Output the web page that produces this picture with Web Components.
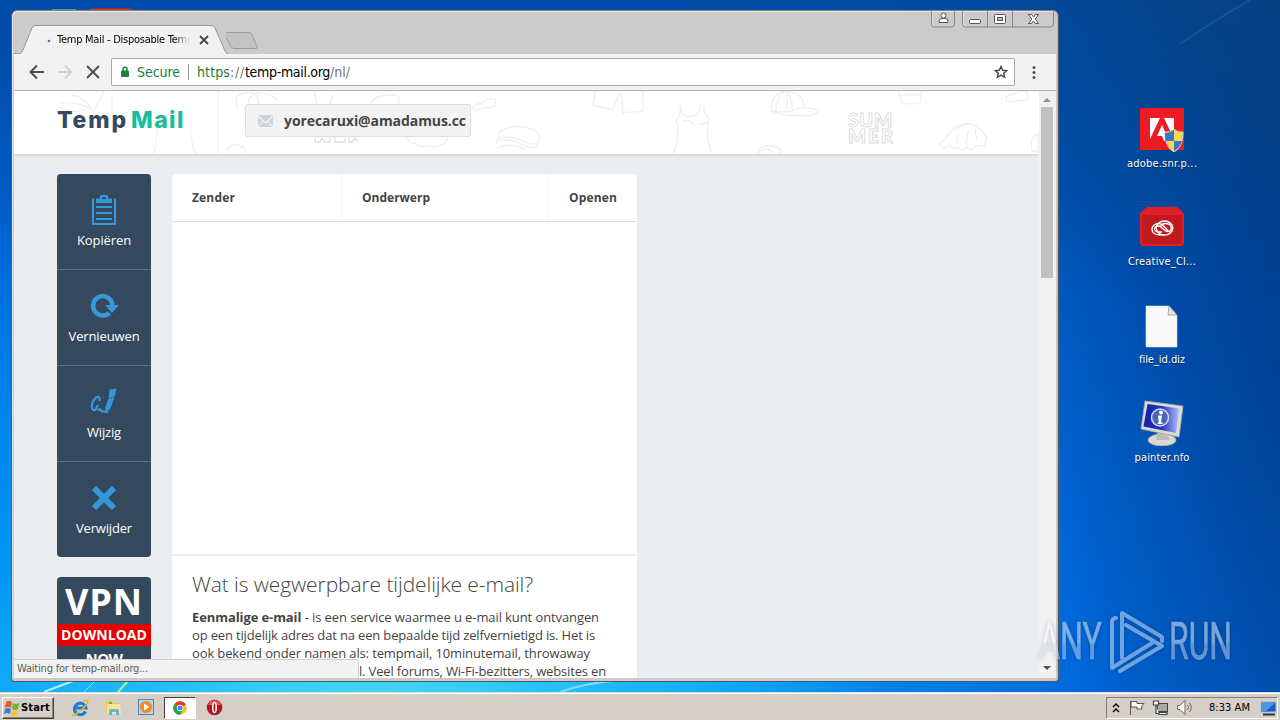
<!DOCTYPE html>
<html lang="nl">
<head>
<meta charset="utf-8">
<title>Desktop</title>
<style>
  html, body { margin: 0; width: 1280px; height: 720px; overflow: hidden; }
  body { font-family: "DejaVu Sans Condensed", "DejaVu Sans", sans-serif; font-size: 11px; }
</style>
</head>
<body>
<desktop-screen>
  <browser-window>
    <mail-page></mail-page>
  </browser-window>

  <desktop-icon label="adobe.snr.p..." width="70" style="left:1122px;top:108px">
    <svg width="44" height="44" viewBox="0 0 44 44">
      <rect width="44" height="42" fill="#ed1c24"/>
      <path d="M10 10h10L10 31zM24 10h10v21zM22 17l7 16h-5l-2-5h-5z" fill="#fff"/>
      <path d="M34 21c3 3 6 3 9 3 0 9-2 16-9 20-7-4-9-11-9-20 3 0 6 0 9-3z" fill="#f5d84c" stroke="#c9d3dc"/>
      <path d="M34 22v11h-8.500q-.5-4-.5-8 5 0 8-3zM34 33h8q-2 7-8 10z" fill="#3b78c4"/>
    </svg>
  </desktop-icon>
  <desktop-icon label="Creative_Cl..." width="68" style="left:1122px;top:206px">
    <svg width="44" height="44" viewBox="0 0 44 44">
      <path d="M1 8l6-6h30l6 6v28q0 3-3 3H4q-3 0-3-3z" fill="#c01a1e" stroke="#ed1c24" stroke-width="2"/>
      <path d="M2 8l6-5h28l6 5z" fill="#d8232a"/><path d="M2 8h40" stroke="#ed1c24" stroke-width="2"/>
      <g fill="none" stroke="#fff" stroke-width="1.400">
        <ellipse cx="24.500" cy="22" rx="8.300" ry="7"/>
        <path d="M24 28.700h-5.500c-4 0-6.500-2.500-6.500-5.500s3-5.700 6.500-5.700c2 0 3.500 1 5 2.500l4.500 4.500"/>
        <path d="M22 26h-3c-2.500 0-4.300-1-4.300-3s2-3 4-3 3 1.500 4.500 3 3 2.500 5 2.500c2 0 3-2 3-4s-2-4-6-4q-3 0-4.500 2"/>
      </g>
    </svg>
  </desktop-icon>
  <desktop-icon label="file_id.diz" width="46" style="left:1122px;top:304px">
    <svg width="44" height="44" viewBox="0 0 44 44">
      <path d="M6 2h23l8 9v32H6z" fill="#f9f9f9" stroke="#d5dce4" stroke-width=".6"/>
      <path d="M29 2l-1 9h9z" fill="#e3e3e3" stroke="#888" stroke-width=".7"/>
    </svg>
  </desktop-icon>
  <desktop-icon label="painter.nfo" width="55" style="left:1122px;top:400px">
    <svg width="44" height="46" viewBox="0 0 44 46">
      <defs><linearGradient id="scr"><stop offset="0" stop-color="#1720a8"/><stop offset=".5" stop-color="#2430c0"/><stop offset="1" stop-color="#b8c2ff"/></linearGradient></defs>
      <ellipse cx="22" cy="40" rx="14" ry="6" fill="#d9d9d2" stroke="#aaa9a3"/>
      <path d="M17 33h11l1 7H16z" fill="#bdbdb6"/>
      <path d="M5 1l38 5-4 31L1 29z" fill="#dcdcd4" stroke="#a8a8a0" stroke-width=".8"/>
      <path d="M7.500 4l32 4.500-3.500 24.500L3.500 26.500z" fill="url(#scr)"/>
      <circle cx="20" cy="17.500" r="8.500" fill="#4e66b8" stroke="#d2dcf5" stroke-width="1.500"/>
      <circle cx="21" cy="12.500" r="1.900" fill="#fff"/><path d="M18 15.500h4l-1.200 7h2l-.3 1.500h-5l.4-1.500h1z" fill="#fff"/>
    </svg>
  </desktop-icon>

  <any-watermark></any-watermark>
  <task-bar slot="bar"></task-bar>
</desktop-screen>

<script>
// Text set to a known width by spreading the difference over its letters
class FitText extends HTMLElement {
  connectedCallback() {
    if (!this.shadowRoot) {
      // no white space around the slot: it would be kept and drawn
      this.attachShadow({ mode: 'open' }).innerHTML =
        '<style>:host { display: inline-block; white-space: pre; }</style><slot></slot>';
    }
    const natural = this.getBoundingClientRect().width;
    const target = Number(this.getAttribute('width'));
    if (natural && target) {
      this.style.letterSpacing = (target - natural) / this.textContent.length + 'px';
    }
  }
}

class DesktopScreen extends HTMLElement {
  constructor() {
    super();
    this.attachShadow({ mode: 'open' }).innerHTML = `
      <style>
        :host { display: flex; flex-direction: column; width: 1280px; height: 720px; overflow: hidden; }
        .area {
          position: relative;
          flex: 1;
          overflow: hidden;
          background:
            radial-gradient(ellipse 520px 200px at 370px 710px, #4bdcf2 0%, rgba(35,190,250,.85) 45%, transparent 100%),
            radial-gradient(ellipse 330px 700px at 1340px 330px, rgba(0,50,120,.7), transparent),
            radial-gradient(ellipse 1320px 820px at 360px 640px, #12b6ff 0%, #0095f4 28%, #006ade 55%, #0056bc 76%, #00489e 100%);
        }
        .area::before {
          content: "";
          position: absolute;
          inset: 0 0 auto 0;
          height: 300px;
          background: linear-gradient(90deg, #004ba6 70%, #07427f);
          -webkit-mask: linear-gradient(#000, transparent);
          mask: linear-gradient(#000, transparent);
          opacity: .85;
        }
        svg { position: absolute; left: 0; top: 0; }
      </style>
      <div class="area">
        <svg width="1280" height="692" viewBox="0 0 1280 692" fill="none">
          <path d="M1180 44Q1215 20 1250 0" stroke="#3f7fc0" stroke-opacity=".3" stroke-width="1.500"/>
          <path d="M44 692q18-7 32-12" stroke="#b9f1ff" stroke-width="2"/>
          <path d="M84 692l10-10" stroke="#7ee0ff"/>
          <path d="M118 692l10-11" stroke="#b6f08a" stroke-width="2"/>
          <path d="M560 692q22-8 52-11" stroke="#8ed8ff" stroke-width="2"/>
          <path d="M90 10l2-1.500h39l2 1.500z" fill="#e52a1c"/><path d="M52 10h24" stroke="#b8c8e0"/>
        </svg>
        <slot></slot>
      </div>
      <slot name="bar"></slot>
    `;
  }
}

class DesktopIcon extends HTMLElement {
  constructor() {
    super();
    this.attachShadow({ mode: 'open' });
  }

  connectedCallback() {
    this.shadowRoot.innerHTML = `
      <style>
        :host { display: flex; position: absolute; flex-direction: column; align-items: center; width: 80px; }
        .icon { height: 49px; }
        :host([label^="painter"]) .icon { height: 51px; }
        .label { color: #fff; line-height: 14px; text-shadow: 0 1px 1px rgba(0,0,0,.5); width: 80px; text-align: center; }
      </style>
      <div class="icon"><slot></slot></div>
      <div class="label"><fit-text width="${this.getAttribute('width')}">${this.getAttribute('label')}</fit-text></div>
    `;
  }
}

class BrowserWindow extends HTMLElement {
  constructor() {
    super();
    this.attachShadow({ mode: 'open' }).innerHTML = `
      <style>
        :host {
          display: flex;
          flex-direction: column;
          position: absolute;
          left: 11px;
          top: 10px;
          width: 1048px;
          height: 672px;
          box-sizing: border-box;
          border: 1px solid #55585c;
          border-top-color: #858585;
          border-radius: 6px 6px 4px 4px;
          padding: 0 2px 3px 2px;
          background: #cbcbcb;
          box-shadow: inset 1px 1px #e6e6e6, inset -1px 0 #bdb8b0;
        }
        .strip { display: flex; height: 43px; justify-content: space-between; }
        .tabs { display: flex; height: 43px; }
        .tab { position: relative; width: 212px; display: flex; align-items: center; padding-top: 14px; box-sizing: border-box; }
        .tab svg.shape { position: absolute; left: 0; top: 14px; }
        .tab .title {
          position: relative;
          margin-left: 43px;
          width: 133px;
          overflow: hidden;
          line-height: 15px;
          color: #000;
          -webkit-mask: linear-gradient(90deg, #000 88%, transparent);
          mask: linear-gradient(90deg, #000 88%, transparent);
        }
        .tab .close { position: relative; margin-left: 9px; }
        .toolbar {
          display: flex;
          align-items: center;
          height: 36px;
          background: #f2f2f2;
          border-bottom: 1px solid #b2b2b2;
          padding-left: 15px;
          box-sizing: content-box;
        }
        .nav { display: flex; gap: 12px; width: 83px; margin-left: -1px; }
        .omnibox {
          display: flex;
          align-items: center;
          width: 902px;
          height: 26px;
          border: 1px solid #a9a9a9;
          border-radius: 2px;
          background: #fff;
          font-size: 14px;
          line-height: 20px;
        }
        .secure { color: #188038; margin-left: 7px; }
        .sep { width: 1px; height: 16px; background: #999; margin: 0 8px; }
        .url { color: #777; flex: 1; }
        .url .s { color: #188038; } .url .h { color: #000; }
        .lock { margin-left: 8px; }
        .star { margin-right: 6px; }
        .menu { margin-left: 15px; }
        .body { position: relative; display: flex; flex: 1; min-height: 0; background: #fff; }
        ::slotted(mail-page) { flex: 1; }
        .scroll { display: flex; flex-direction: column; align-items: center; width: 17px; background: #f1f1f1; }
        .scroll i { width: 12px; height: 171px; background: #c1c1c1; }
        .scroll svg, .scroll i { margin-right: 1px; }
        .scroll .down { margin-top: auto; }
        .status {
          position: absolute;
          left: 0;
          bottom: 0;
          width: 345px;
          height: 19px;
          box-sizing: border-box;
          border: 1px solid #cfcfcf;
          border-left: 0;
          border-bottom: 0;
          border-radius: 0 3px 0 0;
          background: #f2f2f2;
          color: #5a5a5a;
          line-height: 17px;
          padding-left: 3px;
        }
      </style>
      <div class="strip">
        <div class="tabs">
          <div class="tab">
            <svg class="shape" width="214" height="30" fill="none">
              <path d="M0 28.500H6Q8 28 9 25L18 3Q19 .5 21 .5H197Q200 .5 201 3L211 26Q212 28.500 214 28.500V30H0z" fill="#f2f2f2" stroke="#999"/>
              <path d="M0 29.500h214" stroke="#f2f2f2"/>
              <circle cx="35" cy="16" r="1.300" fill="#5b66dd"/>
            </svg>
            <div class="title"><fit-text width="136">Temp Mail - Disposable Temp</fit-text></div>
            <svg class="close" width="10" height="10" stroke="#444" stroke-width="1.800"><path d="M1 1l8 8M9 1l-8 8"/></svg>
          </div>
          <svg width="40" height="43" fill="#c3c3c3" stroke="#9b9b9b"><path d="M1 21.500h23q2 0 3 2l5 12q1 2-1 2H9q-2 0-3-2L-.5 23.500q-.5-2 1.500-2z" transform="translate(-1)"/></svg>
        </div>
        <svg width="126" height="18" fill="none" stroke="#858585">
          <path d="M1.500 0v13q0 3 3 3h17q3 0 3-3V0M32.500 0v13q0 3 3 3h85q3 0 3-3V0M57.500 0v16M82.500 0v16"/>
          <path d="M2.500 0v12q0 3 2 3M33.500 0v12q0 3 2 3" stroke="#e4e4e4"/>
          <g fill="#fff" stroke="#54545c">
            <circle cx="13.500" cy="4.500" r="2.500"/><path d="M9 10.500q0-3 3-3h3q3 0 3 3v1H9z"/>
            <rect x="39.500" y="8.500" width="11" height="4" rx="1"/>
            <rect x="64.500" y="3.500" width="11" height="9" rx="1"/><rect x="67.500" y="6.500" width="5" height="3" fill="#bbb"/>
            <path d="M98.500 3.500h3l2 2.500 2-2.500h3l-3.300 4.500 3.300 4.500h-3l-2-2.500-2 2.500h-3l3.300-4.500z"/>
          </g>
        </svg>
      </div>
      <div class="toolbar">
        <div class="nav">
          <svg width="18" height="18" fill="none" stroke="#505050" stroke-width="2"><path d="M16 9H3M9 2.500L2.500 9 9 15.500"/></svg>
          <svg width="16" height="18" fill="none" stroke="#cfcfcf" stroke-width="2"><path d="M0 9h13M7 2.500L13.500 9 7 15.500"/></svg>
          <svg width="14" height="18" fill="none" stroke="#505050" stroke-width="2"><path d="M1 3l12 12M13 3L1 15"/></svg>
        </div>
        <div class="omnibox">
          <svg class="lock" width="10" height="12"><rect x="1" y="4.500" width="8" height="6.500" rx="1" fill="#188038"/><path d="M3 5V3.300a2 2 0 0 1 4 0V5" fill="none" stroke="#188038" stroke-width="1.500"/></svg>
          <div class="secure"><fit-text width="43">Secure</fit-text></div>
          <div class="sep"></div>
          <div class="url"><fit-text width="33" class="s">https</fit-text><fit-text width="15">://</fit-text><fit-text width="85" class="h">temp-mail.org</fit-text><fit-text width="20">/nl/</fit-text></div>
          <svg class="star" width="14" height="14" fill="none" stroke="#4a4a4a" stroke-width="1.500"><path d="M7 1.500l1.700 3.700 4 .4-3 2.700.9 4L7 10.200l-3.600 2.100.9-4-3-2.700 4-.4z"/></svg>
        </div>
        <svg class="menu" width="8" height="16" fill="#505050"><circle cx="4" cy="3.500" r="1.500"/><circle cx="4" cy="8.500" r="1.500"/><circle cx="4" cy="13.500" r="1.500"/></svg>
      </div>
      <div class="body">
        <slot></slot>
        <div class="scroll">
          <svg width="12" height="16"><path d="M2 11l4-4 4 4z" fill="#909090"/></svg>
          <i></i>
          <svg class="down" width="12" height="16"><path d="M2 4l4 4 4-4z" fill="#505050"/></svg>
        </div>
        <div class="status"><fit-text width="131">Waiting for temp-mail.org...</fit-text></div>
      </div>
    `;
  }
}

class MailPage extends HTMLElement {
  constructor() {
    super();
    this.attachShadow({ mode: 'open' }).innerHTML = `
      <style>
        :host {
          display: flex;
          flex-direction: column;
          min-width: 0;
          overflow: hidden;
          background: #ebeef1;
          color: #444;
          font-family: "Open Sans", sans-serif;
        }
        header {
          position: relative;
          display: flex;
          align-items: center;
          height: 63px;
          flex: none;
          background: #fff;
          box-shadow: 0 1px 3px rgba(0,0,0,.16);
        }
        .doodles { position: absolute; left: 0; top: 0; }
        .logo {
          position: relative;
          width: 188px;
          height: 36px;
          margin: -5px 0 0 43px;
          font: 800 23px/36px Inter, sans-serif;
          color: #34495e;
        }
        .logo .g { color: #1abc9c; margin-left: 3px; }
        .mail {
          position: relative;
          display: flex;
          align-items: center;
          width: 226px;
          height: 33px;
          box-sizing: border-box;
          border: 1px solid #dedede;
          border-radius: 3px;
          margin-top: -4px;
          background: #f3f3f3;
          font-weight: 700;
          font-size: 14px;
          gap: 11px;
          padding-left: 12px;
        }
        main { display: flex; gap: 20px; padding: 20px 0 0 43px; flex: 1; min-height: 0; }
        .side { width: 95px; flex: none; }
        .panel { display: flex; flex-direction: column; background: #fff; width: 465px; border-radius: 4px 4px 0 0; }
        .cols { display: flex; height: 47px; line-height: 47px; border-bottom: 1px solid #dfe2e5; font-weight: 700; font-size: 12px; }
        .cols div { padding-left: 20px; box-sizing: border-box; }
        .cols div + div { border-left: 1px solid #f7f7f8; }
        .rows { height: 332px; flex: none; border-bottom: 2px solid #ededf0; }
        h1 { margin: 13px 0 0 20px; font-weight: 300; font-size: 21px; line-height: 30px; }
        p { margin: 9px 0 0 20px; font-size: 13px; line-height: 18px; }
        p fit-text { display: block; width: max-content; }
        p .tail { margin-left: 167px; }
        .ad { width: 94px; margin-top: 20px; background: #34495e; border-radius: 4px; color: #fff; text-align: center; font-weight: 700; }
        .ad .a { font-size: 36px; line-height: 49px; height: 47px; }
        .ad .b { font-size: 14px; line-height: 22px; background: #e60000; height: 22px; }
        .ad .c { font-size: 15px; line-height: 24px; height: 40px; }
      </style>
      <header>
        <svg class="doodles" width="1025" height="63" fill="none" stroke="#efefef" stroke-width="1.300">
          <path d="M46 12q20-2 34 8l10-20M46 16q14 8 26 2m-14-14q12 2 20 14m20-12v14M140 63q6-20 0-34m38 0q-4 16 4 34" stroke="#f1f1f1"/>
          <path d="M204.500 0v63" stroke="#f4f4f4"/>
          <path d="M224 18q-6-14 6-16t14 6-4 8-6-4q0-8 10-10t20 8M212 60q4-8 12-6t8 8M300 0l3 14 12 2 4-12"/>
          <path d="M357 12q3-8 22-8l6 2v9H358zM393 44q0 8 8 8 4 6 12 2 8 4 14 0 6 0 6-9"/>
          <path d="M459 18q0-6 8-5 6-6 14-5l1 7q-7 3-10 1-8 4-13 2zM483 53l2-11q8-8 24-6 18 3 16 12 0 8-6 9-10-2-16-6-10-3-20-2zM485 47q12-3 24 3 8 5 16 2M483 57q14-6 28 1"/>
          <path d="M581 0l-2 14 20 5 6-16m2-1l2 20 20-2V0M607 4l2 12"/>
          <path d="M666 14q2 8-4 16 4 10-2 33m7-49q-1 4 2 10 9 4 15-2l4-10m2 3q-1 8 5 12-4 14 2 34M668 30q10-2 12 5m4-1q8-3 10-2"/>
          <path d="M757 19q0-17 16-19 16 2 18 17M762 20q1-16 9-19m2 18q0-14 0-18m5 17q0-11-4-18M757 20q14 3 25-2 14-3 23 2-4 7-21 4-14 2-27-4z"/>
          <path d="M744 63q2-10 14-8t8 8M748 60q5-5 12 2"/>
          <path d="M885 0l2 11q12 4 20 0V0M883 4h24M992 8q0-5 7-4 6-5 14-3l1 7q-7 3-10 1-7 3-12 1z"/>
          <path d="M940 40q14-12 24-4M936 41q-4 8-11 12l5 4 6-3q3 6 8 2 4 6 9 0 4 5 9-1l8 0 3-9-10-11q-14-7-27 6zM944 42l-2 12m12-14l-2 15m9-17l2 12M1018 60q-3-14 6-17v18z"/>
          <g stroke="#dedede" stroke-width="1" fill="#fff" font-family="Lato, sans-serif" font-weight="900" font-size="19">
            <text x="834" y="36" textLength="44">SUM</text><text x="834" y="52" textLength="45">MER</text>
          </g>
          <path d="M301 46v5h5l2-4 3 4h5v-5M321 46v5h10v-4M335 46v5h4l2-4 3 4" stroke="#dedede"/>
        </svg>
        <div class="logo"><fit-text width="71">Temp</fit-text><fit-text width="54" class="g">Mail</fit-text></div>
        <div class="mail">
          <svg width="15" height="12" fill="#cdd3d9"><path d="M0 0h15L7.500 7zM0 2l5 4.300L0 11zM15 2l-5 4.300 5 4.700zM.5 12l5.200-5L7.500 8.600 9.300 7l5.200 5z"/></svg>
          <fit-text width="182">yorecaruxi@amadamus.cc</fit-text>
        </div>
      </header>
      <main>
        <div class="side">
          <side-action label="Kopiëren" width="54">
            <svg width="26" height="32" viewBox="0 0 26 32" fill="#3498db"><path d="M1 4.500h2v24.500h20V4.500h2V31H1zM5 4.500h4V2q0-1 1-1h6q1 0 1 1v2.500h4V9H5zM11 3v2h4V3z" fill-rule="evenodd"/><path d="M5 12h16v2H5zM5 18h16v2H5zM5 24h16v2H5z"/></svg>
          </side-action>
          <side-action label="Vernieuwen" width="71">
            <svg width="30" height="30" viewBox="0 0 30 30"><path d="M20.500 21.800A9.700 9.700 0 1 1 23.500 15" fill="none" stroke="#3498db" stroke-width="4.500"/><path d="M16 14h14l-7 8z" fill="#3498db"/></svg>
          </side-action>
          <side-action label="Wijzig" width="34">
            <svg width="30" height="30" viewBox="0 0 30 30" fill="none" stroke="#3498db"><path d="M10.500 14q1-5-2.500-4Q2 14 3 21q1 3 3 2l3-5M8 23l3-1 1 2 3 .5 4 1" stroke-width="2.200"/><path d="M21 3l6-1-1.500 7-5.500 2zM19.500 12.500l5.500-2-4 11-4 4.500-.500-5z" fill="#3498db" stroke-width=".8"/></svg>
          </side-action>
          <side-action label="Verwijder" width="56" last>
            <svg width="28" height="28" viewBox="0 0 28 28" stroke="#3498db" stroke-width="6"><path d="M4 4l20 20M24 4L4 24"/></svg>
          </side-action>
          <div class="ad">
            <div class="a"><fit-text width="78">VPN</fit-text></div>
            <div class="b"><fit-text width="86">DOWNLOAD</fit-text></div>
            <div class="c"><fit-text width="37">NOW</fit-text></div>
          </div>
        </div>
        <div class="panel">
          <div class="cols">
            <div style="width:169px"><fit-text width="43">Zender</fit-text></div>
            <div style="width:207px"><fit-text width="68">Onderwerp</fit-text></div>
            <div><fit-text width="48">Openen</fit-text></div>
          </div>
          <div class="rows"></div>
          <h1><fit-text width="341">Wat is wegwerpbare tijdelijke e-mail?</fit-text></h1>
          <p>
            <fit-text width="407"><b>Eenmalige e-mail</b> - is een service waarmee u e-mail kunt ontvangen</fit-text>
            <fit-text width="403">op een tijdelijk adres dat na een bepaalde tijd zelfvernietigd is. Het is</fit-text>
            <fit-text width="398">ook bekend onder namen als: tempmail, 10minutemail, throwaway</fit-text>
            <fit-text width="247" class="tail">l. Veel forums, Wi-Fi-bezitters, websites en</fit-text>
          </p>
        </div>
      </main>
    `;
  }
}

class SideAction extends HTMLElement {
  constructor() {
    super();
    this.attachShadow({ mode: 'open' });
  }

  connectedCallback() {
    this.shadowRoot.innerHTML = `
      <style>
        :host {
          display: flex;
          flex-direction: column;
          align-items: center;
          width: 94px;
          height: 96px;
          box-sizing: border-box;
          border-bottom: 1px solid #5d7184;
          background: #34495e;
          color: #fff;
          font-size: 13px;
        }
        :host(:first-child) { border-radius: 4px 4px 0 0; }
        :host([last]) { height: 95px; border-bottom: 0; border-radius: 0 0 4px 4px; }
        .icon { display: flex; align-items: center; height: 34px; margin-top: 19px; }
        .label { line-height: 20px; margin-top: 3px; }
      </style>
      <div class="icon"><slot></slot></div>
      <div class="label"><fit-text width="${this.getAttribute('width')}">${this.getAttribute('label')}</fit-text></div>
    `;
  }
}

class AnyWatermark extends HTMLElement {
  constructor() {
    super();
    this.attachShadow({ mode: 'open' }).innerHTML = `
      <style>
        :host { display: block; position: absolute; left: 1036px; top: 606px; opacity: .5; filter: drop-shadow(0 0 2px rgba(0,0,0,.35)); }
        svg { display: block; }
      </style>
      <svg width="200" height="72" fill="none">
        <defs><linearGradient id="fade" x1="0" y1="0" x2="0" y2="1"><stop offset=".5" stop-color="#f4f8ff"/><stop offset=".55" stop-color="#c6d4e8"/></linearGradient></defs>
        <g fill="url(#fade)" stroke="#dce8fa" stroke-width=".6" font-family="Roboto, sans-serif" font-size="52">
          <text x="3" y="53" textLength="63" lengthAdjust="spacingAndGlyphs">ANY</text>
          <text x="133" y="53" textLength="63" lengthAdjust="spacingAndGlyphs">RUN</text>
        </g>
        <g stroke="#dce8fa" stroke-width="4" stroke-linejoin="round" stroke-linecap="round">
          <path d="M80 12q-4 0-4 4v46l40-25"/>
          <path d="M86 52V7l40 24v4"/>
          <path d="M90 19l36 21-42 25"/>
        </g>
      </svg>
    `;
  }
}

class TaskBar extends HTMLElement {
  constructor() {
    super();
    this.attachShadow({ mode: 'open' }).innerHTML = `
      <style>
        :host {
          display: flex;
          align-items: center;
          height: 28px;
          box-sizing: border-box;
          padding: 2px 2px 0 2px;
          background: #d6cfc7;
          border-top: 1px solid #e1ddd8;
          box-shadow: inset 0 1px #fff;
          color: #000;
        }
        .start {
          display: flex;
          align-items: center;
          gap: 2px;
          width: 52px;
          height: 22px;
          box-sizing: border-box;
          border: 1px solid;
          border-color: #fff #404040 #404040 #fff;
          box-shadow: inset -1px -1px #8b8680;
          padding-left: 1px;
          font-weight: 700;
        }
        .quick { display: flex; align-items: center; margin-left: 17px; gap: 16px; flex: 1; }
        .active {
          display: flex;
          align-items: center;
          justify-content: center;
          width: 32px;
          height: 22px;
          box-sizing: border-box;
          border: 1px solid;
          border-color: #404040 #fff #fff #404040;
          background: #fff;
          margin: 0 -6px 0 -7px;
        }
        .tray {
          display: flex;
          align-items: center;
          height: 22px;
          width: 172px;
          box-sizing: border-box;
          border: 1px solid;
          border-color: #857f78 #fff #fff #857f78;
          padding-left: 5px;
        }
        .tray fit-text { margin: 0 10px 0 15px; }
        .tray svg { flex: none; }
      </style>
      <div class="start">
        <svg width="15" height="16"><path d="M2 2q3-2 6 0L7 8Q4 6 1 8z" fill="#e8592b"/><path d="M9 3q3 2 6 0l-1 6q-3 2-6 0z" fill="#6cb53c"/><path d="M1 9q3-2 6 0l-1 5q-3-2-6 0z" fill="#3c7cd4"/><path d="M8 10q3 2 6 0l-1 5q-3 2-6 0z" fill="#f4c430"/></svg>
        <fit-text width="29">Start</fit-text>
      </div>
      <div class="quick">
        <svg width="18" height="18" fill="none"><path d="M14.500 12.500A5.800 5.800 0 1 1 15 9H5" stroke="#1e7fd0" stroke-width="3"/><path d="M2 15Q0 18 5 15 16 8 17 2 16 0 12 3" stroke="#e8b62c" stroke-width="1.500"/></svg>
        <svg width="17" height="17"><path d="M1 2h6l1 2h7v11H1z" fill="#eec65a"/><path d="M2 5h13l1 10H2z" fill="#fae69b"/><path d="M4 16v-4q0-2 2-2h6q2 0 2 2v4h-3v-3H7v3z" fill="#61b4dc"/><path d="M4 3h3v2H4z" fill="#5cb34c"/></svg>
        <svg width="17" height="17"><rect x=".5" y=".5" width="15" height="15" fill="#b5d4ec" stroke="#4c86bb"/><circle cx="8" cy="8" r="6" fill="#f58b1a"/><path d="M6 4.500L11.500 8 6 11.500z" fill="#fff"/></svg>
        <div class="active">
          <svg width="14" height="14" viewBox="-7 -7 14 14"><circle r="6.800" fill="#fbc116"/><path d="M0 0L-5.900-3.400A6.800 6.800 0 0 1 5.900-3.400z" fill="#e33b2e"/><path d="M0 0L-5.900-3.400A6.800 6.800 0 0 0 0 6.800l3-5z" fill="#2da14c"/><circle r="3.200" fill="#fff"/><circle r="2.500" fill="#4285f4"/></svg>
        </div>
        <svg width="17" height="17"><circle cx="8.500" cy="8.500" r="7.800" fill="#b5161c"/><path d="M2 6a7 7 0 0 1 13 0z" fill="#e4595b"/><ellipse cx="8.500" cy="8.500" rx="1.700" ry="5" fill="#9b1015" stroke="#fff" stroke-width="1.600"/></svg>
      </div>
      <div class="tray">
        <svg width="8" height="12" fill="none" stroke="#000" stroke-width="1.500"><path d="M1 5l3-3 3 3M1 10l3-3 3 3"/></svg>
        <svg width="18" height="18" style="margin-left:8px" fill="#fff" stroke="#555"><path d="M2.500 2v14"/><path d="M3 2.500h6v2h7l-2.500 3 .5 2.500H9V8H3z"/></svg>
        <svg width="18" height="18" style="margin-left:6px" fill="#fff" stroke="#444"><rect x="5.500" y="4.500" width="10" height="8" fill="#a9a9a9"/><path d="M7 15.500h8v-2H7zM1.500 2v4h5V2zM4 6.500v8h3" stroke-width="1.200"/></svg>
        <svg width="18" height="18" style="margin-left:6px" fill="none" stroke="#666"><path d="M1.500 6.500H4l5-5v14l-5-5H1.500z" fill="#fff"/><path d="M11.500 6q2 2.500 0 5M13.500 4q3.500 4.500 0 9"/></svg>
        <fit-text width="41">8:33 AM</fit-text>
        <svg width="18" height="18"><rect x="1" y="3" width="15" height="10" fill="#1c5cc0" stroke="#9bc0e8"/><path d="M2 4h13l-9 8H2z" fill="#4f95e4"/><path d="M3 15.500h12" stroke="#334" stroke-width="2"/></svg>
      </div>
    `;
  }
}

customElements.define('desktop-screen', DesktopScreen);
customElements.define('desktop-icon', DesktopIcon);
customElements.define('browser-window', BrowserWindow);
customElements.define('mail-page', MailPage);
customElements.define('side-action', SideAction);
customElements.define('any-watermark', AnyWatermark);
customElements.define('task-bar', TaskBar);
// measured last, once every slot it sits in has its layout
customElements.define('fit-text', FitText);
</script>
</body>
</html>
